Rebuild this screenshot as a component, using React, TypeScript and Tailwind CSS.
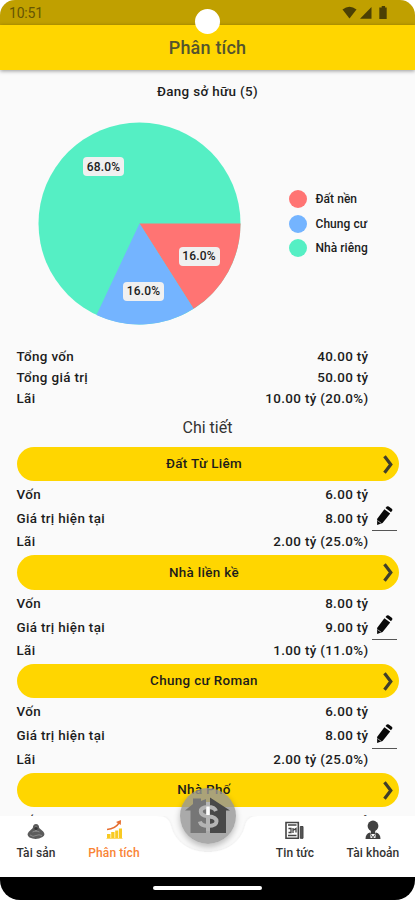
import type { ReactNode } from "react";

interface Asset {
  name: string;
  capital: string;
  value?: string;
  profit?: string;
}

const legend = [
  { label: "Đất nền", color: "bg-[#ff7473]" },
  { label: "Chung cư", color: "bg-[#74b4ff]" },
  { label: "Nhà riêng", color: "bg-[#55efc4]" },
];

const totals = [
  { label: "Tổng vốn", value: "40.00 tỷ" },
  { label: "Tổng giá trị", value: "50.00 tỷ" },
  { label: "Lãi", value: "10.00 tỷ (20.0%)" },
];

const assets: Asset[] = [
  { name: "Đất Từ Liêm", capital: "6.00 tỷ", value: "8.00 tỷ", profit: "2.00 tỷ (25.0%)" },
  { name: "Nhà liền kề", capital: "8.00 tỷ", value: "9.00 tỷ", profit: "1.00 tỷ (11.0%)" },
  { name: "Chung cư Roman", capital: "6.00 tỷ", value: "8.00 tỷ", profit: "2.00 tỷ (25.0%)" },
  { name: "Nhà Phố", capital: "6.00 tỷ" },
];

function StatusBar() {
  return (
    <div className="flex h-[25px] items-center justify-between bg-[#c0a000] pl-[9px] pr-[27px] text-[#655504]">
      <span className="pt-px text-[14px] font-normal tracking-[-0.2px]">10:51</span>
      <svg width="46" height="14" viewBox="0 0 46 14" fill="#4b4004">
        <path d="M0.5 3.6Q7.5 -2 14.5 3.6L7.5 12.5Z" />
        <path d="M29.5 1V12.7H18Z" />
        <path d="M38 1.5H39.7V0H43.1V1.5H44.7V13H37.3V1.5Z" />
      </svg>
    </div>
  );
}

function PieChart() {
  return (
    <div className="relative h-[203px] w-[203px]">
      <svg width="203" height="203" viewBox="-101.5 -101.5 203 203">
        <circle r="101" fill="#55efc4" />
        <path d="M0 0H101A101 101 0 0 1 54.1 85.3Z" fill="#ff7473" />
        <path d="M0 0L54.1 85.3A101 101 0 0 1 -43 91.4Z" fill="#74b4ff" />
      </svg>
      <PieLabel className="left-[45px] top-[35px]">68.0%</PieLabel>
      <PieLabel className="left-[140.5px] top-[124.5px]">16.0%</PieLabel>
      <PieLabel className="left-[85px] top-[159.5px]">16.0%</PieLabel>
    </div>
  );
}

function PieLabel({ className, children }: { className: string; children: ReactNode }) {
  return (
    <span
      className={`absolute flex h-[19px] w-[41px] items-center justify-center rounded-[4px] bg-[#f0f0f0] text-[12px] font-medium tracking-[0.2px] ${className}`}
    >
      {children}
    </span>
  );
}

function PencilIcon() {
  return (
    <svg width="18" height="20" viewBox="0 0 18 20" fill="#080808">
      <path d="M9.4 3.2L15.2 7.4L7.6 16.9L2.1 18.9L2.1 13Z" />
      <path d="M10.5 2L11.8 0.6Q12.7 -0.2 13.8 0.6L16.8 2.8Q17.8 3.7 17.1 4.7L16 6.3Z" />
      <path d="M2.4 14.6L6 17.1" stroke="#fafafa" strokeWidth="0.6" />
    </svg>
  );
}

function Row({ label, value, className, children }: { label: string; value: string; className: string; children?: ReactNode }) {
  return (
    <div className={`flex items-center ${className}`}>
      <span>{label}</span>
      <span className="ml-auto">{value}</span>
      <div className="flex w-[30px] justify-end">{children}</div>
    </div>
  );
}

function AssetCard({ asset }: { asset: Asset }) {
  return (
    <div className="h-[108.7px]">
      <div className="relative flex h-[34.4px] items-center justify-center rounded-full bg-[#ffd600] pr-[7px]">
        <span>{asset.name}</span>
        <svg className="absolute right-[4.5px] top-[8px]" width="11" height="19" viewBox="0 0 11 19" fill="none" stroke="#403f2b" strokeWidth="3.2">
          <path d="M1.5 1.2L7.8 9.5L1.5 17.8" />
        </svg>
      </div>
      <Row className="mt-[3.3px] h-[21px]" label="Vốn" value={asset.capital} />
      {asset.value && (
        <Row className="h-[27px]" label="Giá trị hiện tại" value={asset.value}>
          <div className="mr-[2px] flex h-[25px] w-[25px] shrink-0 justify-center border-b border-[#555]">
            <PencilIcon />
          </div>
        </Row>
      )}
      {asset.profit && <Row className="h-[20px]" label="Lãi" value={asset.profit} />}
    </div>
  );
}

function NavItem({ label, className, children }: { label: string; className: string; children: ReactNode }) {
  return (
    <div className={`flex flex-col items-center ${className}`}>
      <div className="flex h-[20px] items-end">{children}</div>
      <span className="mt-[5px] whitespace-nowrap text-[12px] leading-[16px] tracking-[0.1px]">{label}</span>
    </div>
  );
}

function BottomNav() {
  return (
    <div className="absolute bottom-[24px] left-0 h-[60.5px] w-full">
      <svg className="absolute left-0 top-0" width="415" height="61" viewBox="0 0 415 61">
        <defs>
          <filter id="notchShade" x="-10%" y="-20%" width="120%" height="140%">
            <feDropShadow dx="0" dy="0" stdDeviation="1.5" floodOpacity="0.08" />
          </filter>
        </defs>
        <path
          d="M0 0H156C166 0 169 3 171 10C175 26 189 36 208 36C227 36 241 26 245 10C247 3 250 0 260 0H415V61H0Z"
          fill="#fff"
          filter="url(#notchShade)"
        />
      </svg>
      <div className="relative flex h-full pt-[4.5px] text-[#333]">
        <NavItem label="Tài sản" className="w-[72px]">
          <svg width="18" height="17" viewBox="0 0 18 17" fill="#5b5b5b">
            <path d="M9 1Q12 1 12.2 5L16.2 8.5Q19 12 15.5 14Q9 17.5 2.5 14.5Q-1 12 1.8 8.8L5.8 5Q6 1 9 1Z" />
            <path d="M9 3V9M5.5 9Q9 6.5 12.5 9M3 12Q6 14.5 9 12.5Q12 11 15 12.5" fill="none" stroke="#aaa" strokeWidth="0.6" />
            <circle cx="9" cy="5.5" r="1.6" fill="#333" />
          </svg>
        </NavItem>
        <NavItem label="Phân tích" className="w-[84px] text-[#f98435]">
          <svg width="17" height="20" viewBox="0 0 17 20">
            <path d="M1 14H4.5V18H1ZM5.2 12H8.5V18H5.2ZM9.2 10.5H12.2V18H9.2ZM12.9 8.5H16V18H12.9Z" fill="#f8ca22" />
            <path d="M0.5 18.5H16.5" stroke="#fbd96a" />
            <path d="M1 9.5Q9.5 8.5 13 3" fill="none" stroke="#e66f32" strokeWidth="1.5" />
            <path d="M10 2L15 0L14.8 5Z" fill="#e66f32" />
          </svg>
        </NavItem>
        <NavItem label="Tin tức" className="ml-[98px] w-[82px]">
          <svg width="20" height="19" viewBox="0 0 20 19" fill="none" stroke="#444" strokeWidth="1.6">
            <path d="M1 1.5H13.3V17.3H1Z" />
            <path d="M3 4H11.5M3.5 7.5H6V11.5H3.5M8 7V12M8 9.5L11 7.5V11.5M3 14.5H11.5" strokeWidth="1.3" />
            <path d="M15.3 17.3V5.5H18V17.3Z" fill="#555" strokeWidth="1" />
          </svg>
        </NavItem>
        <NavItem label="Tài khoản" className="w-[74px]">
          <svg width="16" height="20" viewBox="0 0 16 20" fill="#414141">
            <circle cx="8" cy="6" r="5.4" />
            <path d="M5.8 10.5H10.2V14H5.8Z" />
            <path d="M0.5 19Q0.5 13.5 5 12.5L8 17L11 12.5Q15.5 13.5 15.5 19Z" />
            <path d="M5.2 13.8L7.6 18H5.5ZM10.8 13.8L8.4 18H10.5Z" fill="#eee" />
          </svg>
        </NavItem>
      </div>
      <div className="absolute left-[180px] top-[-27.5px] size-[56px] rounded-full bg-[#969696]/80 shadow-[0_3px_6px_rgba(0,0,0,0.25)]">
        <svg width="56" height="56" viewBox="0 0 56 56">
          <path d="M26 11V45H10.5V22.5H5L13 16V10.5H21V13Z" fill="#767676" />
          <path d="M30 9.5L50 22.5H46V45H30Z" fill="#484848" />
          <path d="M36 23Q34.5 19 28 19Q20.8 19 20.8 23.5Q20.8 27.5 28 28.3Q36.5 29.2 36.5 33.3Q36.5 38 28 38Q21 38 19.8 33.5M28 14V43" fill="none" stroke="#b4b4b4" strokeWidth="4" />
          <path d="M28 18.5V27" stroke="#fff" strokeWidth="3.4" />
        </svg>
      </div>
    </div>
  );
}

export default function App() {
  return (
    <div className="h-[900px] w-[415px] overflow-hidden bg-white font-['Roboto','Noto_Sans',sans-serif]">
      <div className="relative flex h-full flex-col overflow-hidden rounded-t-[15px] rounded-b-[20px] bg-[#fafafa] text-[13.4px] font-medium tracking-[0.35px] text-[#1c1c1c]">
        <StatusBar />
        <header className="z-10 flex h-[45px] shrink-0 items-center justify-center bg-[#ffd600] text-[18px] tracking-[0.2px] text-[#54542e] shadow-[0_1px_4px_rgba(0,0,0,0.4)]">
          <h1>Phân tích</h1>
        </header>
        <div className="absolute left-[195px] top-[9px] z-20 size-[25px] rounded-full bg-white" />

        <main className="h-[760px] shrink-0 overflow-hidden px-[16.5px]">
          <h2 className="mt-[12px] text-center leading-[20px]">Đang sở hữu (5)</h2>
          <div className="mt-[20px] flex items-center pl-[21.5px]">
            <PieChart />
            <div className="ml-[48px] flex flex-col gap-[6.5px] text-[12px] tracking-[0.05px]">
              {legend.map((item) => (
                <div key={item.label} className="flex h-[18px] items-center gap-[8.5px]">
                  <span className={`size-[18px] rounded-full ${item.color}`} />
                  <span>{item.label}</span>
                </div>
              ))}
            </div>
          </div>
          <div className="mt-[21.3px]">
            {totals.map((row) => (
              <Row key={row.label} className="h-[21.3px]" label={row.label} value={row.value} />
            ))}
          </div>
          <h2 className="mt-[4.5px] h-[32px] text-center text-[16px] font-normal leading-[26px] tracking-normal text-[#333]">Chi tiết</h2>
          {assets.map((asset) => (
            <AssetCard key={asset.name} asset={asset} />
          ))}
        </main>

        <BottomNav />
        <div className="mt-auto flex h-[24px] shrink-0 items-center justify-center bg-black">
          <div className="h-[4px] w-[109px] rounded-full bg-white" />
        </div>
      </div>
    </div>
  );
}
